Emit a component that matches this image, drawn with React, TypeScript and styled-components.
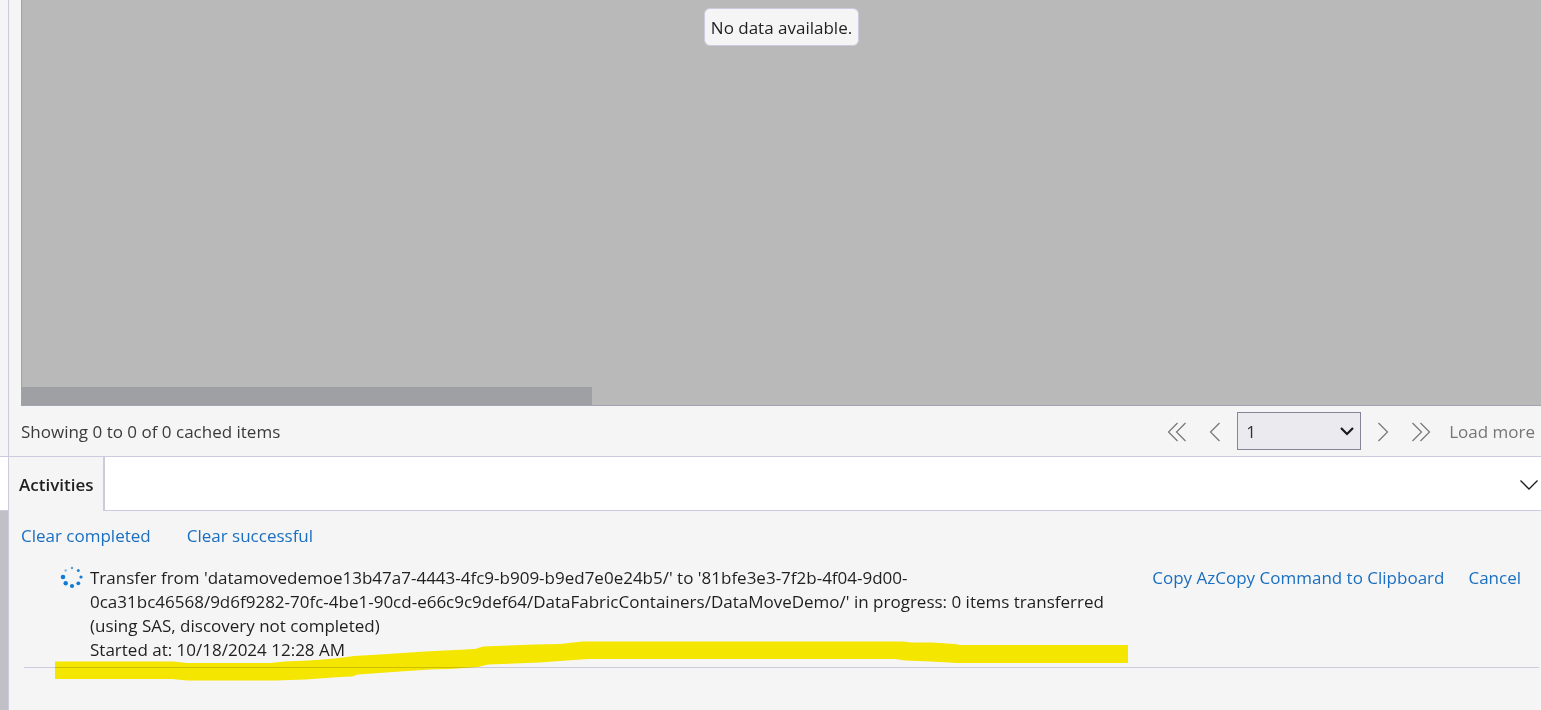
import React from 'react';
import styled, { createGlobalStyle } from 'styled-components';

const line = '#cccbdd';
const surface = '#f5f5f5';

const GlobalStyle = createGlobalStyle`
  *, *::before, *::after { box-sizing: border-box; }
  body {
    margin: 0;
    background: ${surface};
    color: #1f1f1f;
    font-family: "Segoe UI", "Open Sans", "Noto Sans", sans-serif;
    font-size: 17px;
    line-height: 24px;
  }
  button, select { font: inherit; color: inherit; }
`;

const Shell = styled.div`
  display: flex;
  min-height: 100vh;
  overflow: hidden;
`;

const SideStrip = styled.div`
  display: flex;
  flex-direction: column;
  flex: 0 0 9px;
  border-right: 1px solid ${line};
`;

const SideUpper = styled.div`
  flex: 1;
  border-bottom: 1px solid ${line};
`;

const SideHeader = styled.div`
  height: 54px;
  background: #fff;
  border-bottom: 1px solid ${line};
`;

const SideLower = styled.div`
  height: 199px;
  background: #c0c0c6;
`;

const Main = styled.main`
  display: flex;
  flex-direction: column;
  flex: 1;
  min-width: 0;
`;

const DataArea = styled.section`
  display: flex;
  flex-direction: column;
  flex: 1;
  margin-left: 12px;
  background: #b9b9b9;
  border-left: 1px solid #a2a2aa;
  border-bottom: 1px solid #a3a2b0;
`;

const DataBody = styled.div`
  flex: 1;
  display: flex;
  align-items: flex-start;
  justify-content: center;
  padding-top: 8px;
`;

const EmptyNotice = styled.p`
  margin: 0;
  padding: 7px 6px 5px;
  background: ${surface};
  border: 1px solid ${line};
  border-radius: 6px;
`;

const ScrollThumb = styled.div`
  width: 37.5%;
  height: 18px;
  background: #9fa0a4;
`;

const Pager = styled.div`
  display: flex;
  align-items: center;
  justify-content: space-between;
  height: 51px;
  padding: 0 6px 0 12px;
  border-bottom: 1px solid ${line};
`;

const Status = styled.span`
  padding-top: 2px;
  color: #3b3b3b;
`;

const PagerControls = styled.div`
  display: flex;
  align-items: center;
`;

const IconButton = styled.button`
  display: flex;
  justify-content: center;
  width: 38px;
  padding: 2px 0 0;
  border: 0;
  background: none;
  color: #767676;
`;

const SelectWrap = styled.label`
  display: flex;
  position: relative;
  margin: 0 3px;
`;

const PageSelect = styled.select`
  appearance: none;
  width: 124px;
  height: 38px;
  padding: 2px 8px 0;
  border: 1px solid #868598;
  border-radius: 0;
  background: #ebeaef;
  color: #333;
`;

const SelectArrow = styled.svg`
  position: absolute;
  right: 7px;
  top: 15px;
  pointer-events: none;
`;

const TextButton = styled.button<{ $muted?: boolean }>`
  padding: 0;
  border: 0;
  background: none;
  white-space: nowrap;
  color: ${(p) => (p.$muted ? '#767676' : '#1a6fc0')};
`;

const LoadMore = styled(TextButton)`
  margin-left: 9px;
  padding-top: 2px;
`;

const TabBar = styled.div`
  display: flex;
  height: 54px;
`;

const Tab = styled.button`
  padding: 2px 9px 0 10px;
  border: 0;
  border-right: 2px solid ${line};
  background: ${surface};
  font-weight: 600;
`;

const TabFill = styled.div`
  display: flex;
  flex: 1;
  align-items: center;
  justify-content: flex-end;
  background: #fff;
  border-bottom: 1px solid ${line};
`;

const CollapseButton = styled.button`
  display: flex;
  padding: 4px 2px 2px;
  border: 0;
  background: none;
`;

const Activities = styled.section`
  padding: 13px 2px 42px 12px;
`;

const Toolbar = styled.div`
  display: flex;
  gap: 36px;
`;

const ActivityRow = styled.article`
  position: relative;
  display: flex;
  align-items: flex-start;
  margin: 18px 0 0 3px;
  padding: 0 18px 5px 36px;
  border-bottom: 1px solid ${line};
`;

const Spinner = styled.svg`
  flex: none;
  margin-right: 6px;
`;

const Message = styled.p`
  flex: 1;
  margin: 0;
  overflow-wrap: break-word;
`;

const Actions = styled.div`
  display: flex;
  gap: 24px;
  margin-left: 32px;
`;

const Highlight = styled.svg`
  position: absolute;
  left: 31px;
  bottom: -15px;
  mix-blend-mode: multiply;
  pointer-events: none;
`;

const dots = [
  [12, 2, 1.2, 0.7],
  [18.3, 4.5, 1.5, 0.9],
  [21, 11, 1.6, 1],
  [18.3, 17.3, 1.9, 1],
  [12, 20, 2.1, 1],
  [5.7, 17.3, 2.2, 1],
  [3, 11, 2.3, 1],
  [5.7, 4.5, 1.2, 0.5],
];

function Chevrons({ d, width }: { d: string; width: number }) {
  return (
    <svg width={width} height="20" viewBox={`0 0 ${width} 20`} fill="none" stroke="currentColor" strokeWidth="1.2" aria-hidden="true">
      <path d={d} />
    </svg>
  );
}

export default function App() {
  return (
    <>
      <GlobalStyle />
      <Shell>
        <SideStrip>
          <SideUpper />
          <SideHeader />
          <SideLower />
        </SideStrip>
        <Main>
          <DataArea>
            <DataBody>
              <EmptyNotice>No data available.</EmptyNotice>
            </DataBody>
            <ScrollThumb />
          </DataArea>
          <Pager>
            <Status>Showing 0 to 0 of 0 cached items</Status>
            <PagerControls>
              <IconButton aria-label="First page">
                <Chevrons width={20} d="M10.5 1 1.5 10l9 9M18.5 1l-9 9 9 9" />
              </IconButton>
              <IconButton aria-label="Previous page">
                <Chevrons width={12} d="M10.5 1 1.5 10l9 9" />
              </IconButton>
              <SelectWrap>
                <PageSelect aria-label="Page" defaultValue="1">
                  <option>1</option>
                </PageSelect>
                <SelectArrow width="14" height="9" viewBox="0 0 14 9" fill="none" stroke="#1a1a1a" strokeWidth="2.2">
                  <path d="M1 1l6 6 6-6" />
                </SelectArrow>
              </SelectWrap>
              <IconButton aria-label="Next page">
                <Chevrons width={12} d="M1.5 1l9 9-9 9" />
              </IconButton>
              <IconButton aria-label="Last page">
                <Chevrons width={20} d="M1.5 1l9 9-9 9M9.5 1l9 9-9 9" />
              </IconButton>
              <LoadMore $muted>Load more</LoadMore>
            </PagerControls>
          </Pager>
          <TabBar>
            <Tab>Activities</Tab>
            <TabFill>
              <CollapseButton aria-label="Collapse panel">
                <svg width="20" height="12" viewBox="0 0 20 12" fill="none" stroke="#1a1a1a" strokeWidth="1.3">
                  <path d="M1.5 1.5 10 10l8.5-8.5" />
                </svg>
              </CollapseButton>
            </TabFill>
          </TabBar>
          <Activities>
            <Toolbar>
              <TextButton>Clear completed</TextButton>
              <TextButton>Clear successful</TextButton>
            </Toolbar>
            <ActivityRow>
              <Spinner width="24" height="24" viewBox="0 0 24 24" fill="#0f7bd4" aria-hidden="true">
                {dots.map(([x, y, r, o], i) => (
                  <circle key={i} cx={x} cy={y} r={r} opacity={o} />
                ))}
              </Spinner>
              <Message>
                Transfer from 'datamovedemoe13b47a7-4443-4fc9-b909-b9ed7e0e24b5/' to '81bfe3e3-7f2b-4f04-9d00-
                <br />
                0ca31bc46568/9d6f9282-70fc-4be1-90cd-e66c9c9def64/DataFabricContainers/DataMoveDemo/' in progress: 0 items transferred (using SAS, discovery not completed)
                <br />
                Started at: 10/18/2024 12:28 AM
              </Message>
              <Actions>
                <TextButton>Copy AzCopy Command to Clipboard</TextButton>
                <TextButton>Cancel</TextButton>
              </Actions>
              <Highlight width="1073" height="41" viewBox="55 641 1073 41" aria-hidden="true">
                <path
                  fill="#fff000"
                  d="M55 661.5H173L187 663H270L285 661.5 308 660.5 330 659 347 657 354 656 380 654.5 425 651.5 475 649 483 646.5 535 644.5 560 644 582 641.5H903L911 642.5H932L955 644 960 645H1128V663H957L930 661.5 905 660.5 895 659H588L560 661 540 662.5 488 664.5 478 667 450 669 430 669.5 400 671.5 358 674.5 352 676.5 340 677 305 679.5 276 680.5H187L172 679H55Z"
                />
              </Highlight>
            </ActivityRow>
          </Activities>
        </Main>
      </Shell>
    </>
  );
}
